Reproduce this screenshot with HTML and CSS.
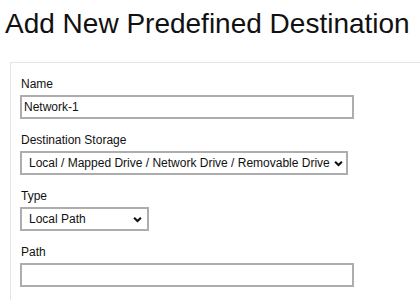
FILE: index.html
```html
<!DOCTYPE html>
<html lang="en">
<head>
    <meta charset="UTF-8">
    <title>Add New Predefined Destination</title>
    <link rel="stylesheet" href="styles.css">
</head>
<body>
    <h1 class="title">Add New Predefined Destination</h1>
    <div class="panel">
        <div class="field">
            <label for="name">Name</label>
            <input type="text" id="name" class="text wide" value="Network-1">
        </div>
        <div class="field">
            <label for="storage">Destination Storage</label>
            <div class="select storage" id="storage">
                <span>Local / Mapped Drive / Network Drive / Removable Drive</span>
                <svg class="chev" viewBox="0 0 10 7"><path d="M1.2 1.5 L5 5.2 L8.8 1.5" fill="none" stroke="#111" stroke-width="2.3"/></svg>
            </div>
        </div>
        <div class="field">
            <label for="type">Type</label>
            <div class="select type" id="type">
                <span>Local Path</span>
                <svg class="chev" viewBox="0 0 10 7"><path d="M1.2 1.5 L5 5.2 L8.8 1.5" fill="none" stroke="#111" stroke-width="2.3"/></svg>
            </div>
        </div>
        <div class="field last">
            <label for="path">Path</label>
            <input type="text" id="path" class="text wide" value="">
        </div>
    </div>
</body>
</html>
```

FILE: styles.css
```css
body {
    margin: 0;
    padding: 8px 0 0 5px;
    font-family: "Liberation Sans", Arial, sans-serif;
    color: #111;
    background: #fff;
    overflow: hidden;
}

.title {
    margin: 0 0 22px 0;
    font-size: 28px;
    font-weight: normal;
    line-height: 32px;
    white-space: nowrap;
}

/* panel runs on past the right and bottom edges of the window */
.panel {
    box-sizing: border-box;
    margin-left: 5px;
    width: 410px;
    border: 1px solid #e4e4e4;
    border-right: none;
    border-bottom: none;
    padding: 14px 0 13px 9px;
}

.field {
    margin-bottom: 14px;
}

.field.last {
    margin-bottom: 0;
}

.field label {
    display: block;
    font-size: 12px;
    line-height: 14px;
    margin-bottom: 4px;
    padding-left: 1px;
}

.text {
    display: block;
    box-sizing: border-box;
    height: 24px;
    border: 2px solid #adadad;
    padding: 0 2px;
    font-family: "Liberation Sans", Arial, sans-serif;
    font-size: 12px;
    color: #111;
    outline: none;
}

.wide {
    width: 334px;
}

.select {
    box-sizing: border-box;
    height: 24px;
    border: 2px solid #adadad;
    display: flex;
    align-items: center;
    gap: 6px;
    padding: 0 5px 0 7px;
    font-size: 12px;
}

.select span {
    flex: 1;
    min-width: 0;
    white-space: nowrap;
    overflow: hidden;
}

.storage {
    width: 328px;
    gap: 4px;
    padding-right: 3px;
}

.type {
    width: 129px;
}

.chev {
    flex-shrink: 0;
    width: 9px;
    height: 7px;
}
```
